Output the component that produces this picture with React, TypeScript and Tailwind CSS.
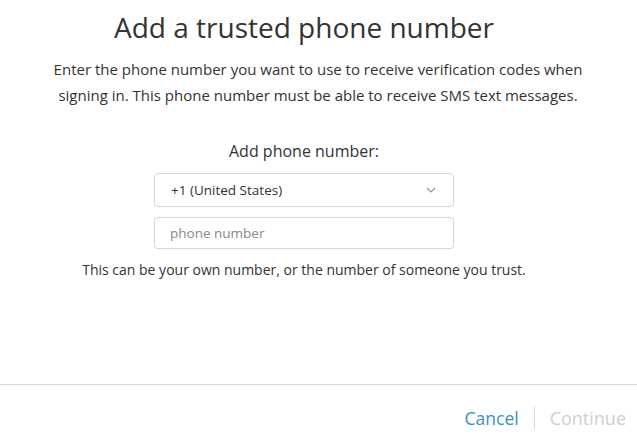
import React from 'react';

const App: React.FC = () => {
    return (
        <div className="w-[637px] h-[445px] bg-white flex flex-col text-[#333] overflow-hidden" style={{ fontFamily: '"Open Sans", "Liberation Sans", sans-serif' }}>
            <div className="w-[608px] flex flex-col items-center">
                <h1 className="mt-[7px] text-[28px] leading-[40px] text-[#333]">Add a trusted phone number</h1>
                <p className="mt-[9px] ml-[28px] w-[560px] text-center text-[15px] leading-[26px] text-[#333]">
                    Enter the phone number you want to use to receive verification codes when signing in. This phone number must be able to receive SMS text messages.
                </p>
                <div className="mt-[32px] text-[16px] leading-[22px]">Add phone number:</div>
                <div className="mt-[11px] w-[300px] h-[34px] border border-[#d6d6d6] rounded-[4px] flex items-center justify-between px-[16px] text-[13.5px]">
                    <span>+1 (United States)</span>
                    <svg width="10" height="6" viewBox="0 0 10 6" className="mr-[1px]">
                        <path d="M1 1 L5 5 L9 1" fill="none" stroke="#999" strokeWidth="1.2" />
                    </svg>
                </div>
                <input
                    type="text"
                    placeholder="phone number"
                    className="mt-[10px] w-[300px] h-[32px] border border-[#d6d6d6] rounded-[4px] px-[15px] text-[13.5px] outline-none placeholder:text-[#888]"
                />
                <div className="mt-[11px] text-[14px] leading-[20px]">This can be your own number, or the number of someone you trust.</div>
            </div>
            <div className="mt-auto border-t border-[#d6d6d6] h-[61px] flex items-center justify-end pt-[6px] pr-[11px] text-[18px]">
                <button className="text-[#3b8fc4] text-[17.5px]">Cancel</button>
                <span className="mx-[15px] w-px h-[22px] bg-[#d6d6d6]" />
                <button className="text-[#cfcfcf]">Continue</button>
            </div>
        </div>
    );
};

export default App;
